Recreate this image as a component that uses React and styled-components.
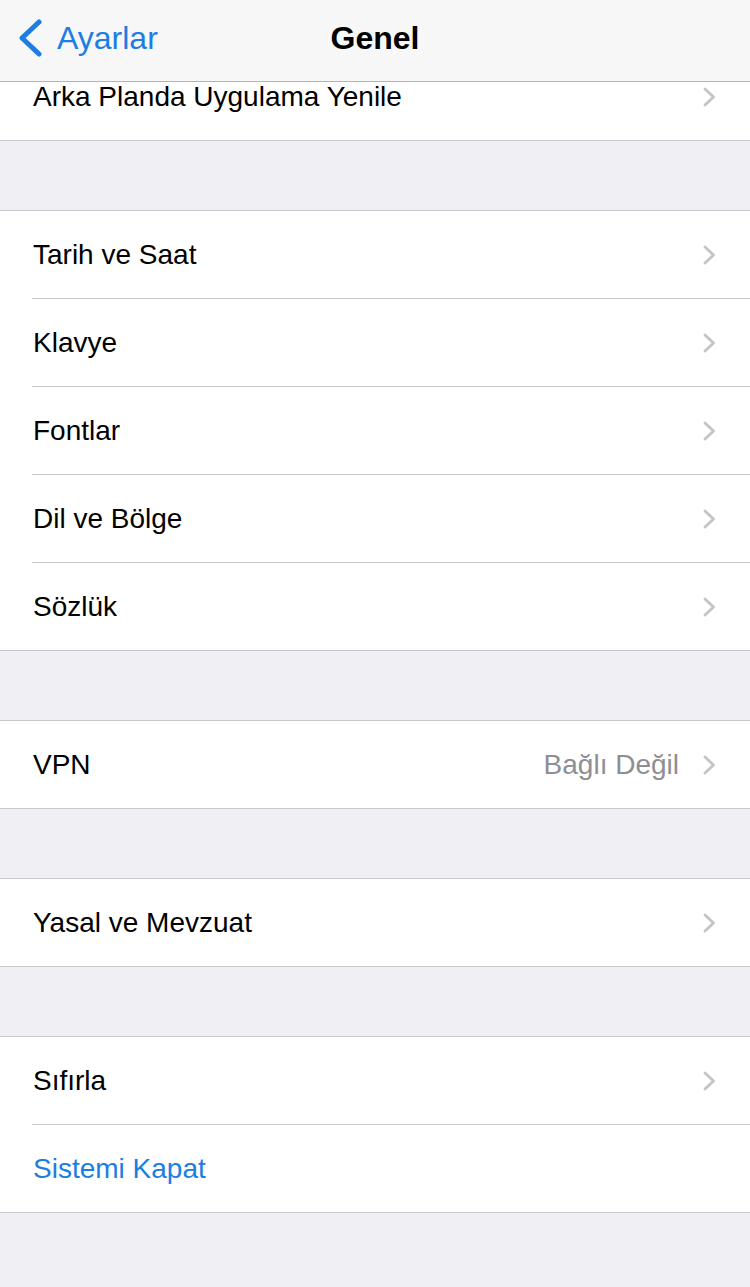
import React from "react";
import styled, { createGlobalStyle } from "styled-components";

const GlobalStyle = createGlobalStyle`
  html, body {
    margin: 0;
    padding: 0;
    background: #efeff4;
  }
  body {
    font-family: "Liberation Sans", Arial, sans-serif;
    -webkit-font-smoothing: antialiased;
  }
`;

const BLUE = "#1c7de2";
const LINE = "#c8c7cc";

const Screen = styled.div`
  width: 750px;
  height: 1287px;
  display: flex;
  flex-direction: column;
  background: #efeff4;
  overflow: hidden;
`;

const NavBar = styled.header`
  flex: 0 0 82px;
  box-sizing: border-box;
  display: grid;
  grid-template-columns: 1fr auto 1fr;
  align-items: center;
  background: #f7f7f7;
  border-bottom: 1px solid #b4b4b8;
  padding-bottom: 5px;
`;

const BackButton = styled.button`
  justify-self: start;
  display: flex;
  align-items: center;
  gap: 15px;
  padding: 0 0 0 18px;
  border: none;
  background: none;
  color: ${BLUE};
  font-family: inherit;
  font-size: 32px;
  cursor: pointer;
`;

const Title = styled.h1`
  margin: 0;
  font-size: 32px;
  font-weight: 700;
  color: #000;
`;

const Viewport = styled.main`
  flex: 1;
  overflow: hidden;
`;

// scrolled a little: the top of the first group sits under the nav bar
const List = styled.div`
  margin-top: -30px;
  display: flex;
  flex-direction: column;
  gap: 69px;
`;

const Group = styled.section`
  background: #fff;
  border-top: 1px solid ${LINE};
  border-bottom: 1px solid ${LINE};
`;

const Row = styled.div`
  height: 87px;
  display: flex;
  align-items: center;
  padding: 0 34px 0 33px;

  & + & {
    border-top: 1px solid ${LINE};
    margin-left: 32px;
    padding-left: 1px;
  }
`;

const Label = styled.span`
  flex: 1;
  font-size: 28px;
  color: ${(p) => (p.$accent ? BLUE : "#000")};
`;

const Value = styled.span`
  font-size: 28px;
  color: #8e8e93;
  margin-right: 24px;
`;

const Chevron = () => (
  <svg width="13" height="20" viewBox="0 0 13 20">
    <path
      d="M2 2 L10.5 10 L2 18"
      fill="none"
      stroke="#c4c4c8"
      strokeWidth="2.8"
      strokeLinecap="round"
      strokeLinejoin="round"
    />
  </svg>
);

const BackChevron = () => (
  <svg width="24" height="38" viewBox="0 0 24 38">
    <path
      d="M21 3 L4 19 L21 35"
      fill="none"
      stroke={BLUE}
      strokeWidth="5"
      strokeLinecap="round"
      strokeLinejoin="round"
    />
  </svg>
);

const Item = ({ label, value, accent, arrow = true }) => (
  <Row>
    <Label $accent={accent}>{label}</Label>
    {value && <Value>{value}</Value>}
    {arrow && <Chevron />}
  </Row>
);

const groups = [
  [{ label: "Arka Planda Uygulama Yenile" }],
  [
    { label: "Tarih ve Saat" },
    { label: "Klavye" },
    { label: "Fontlar" },
    { label: "Dil ve Bölge" },
    { label: "Sözlük" },
  ],
  [{ label: "VPN", value: "Bağlı Değil" }],
  [{ label: "Yasal ve Mevzuat" }],
  [{ label: "Sıfırla" }, { label: "Sistemi Kapat", accent: true, arrow: false }],
];

export default function App() {
  return (
    <Screen>
      <GlobalStyle />
      <NavBar>
        <BackButton>
          <BackChevron />
          Ayarlar
        </BackButton>
        <Title>Genel</Title>
        <div />
      </NavBar>
      <Viewport>
        <List>
          {groups.map((items, i) => (
            <Group key={i}>
              {items.map((it) => (
                <Item key={it.label} {...it} />
              ))}
            </Group>
          ))}
        </List>
      </Viewport>
    </Screen>
  );
}
